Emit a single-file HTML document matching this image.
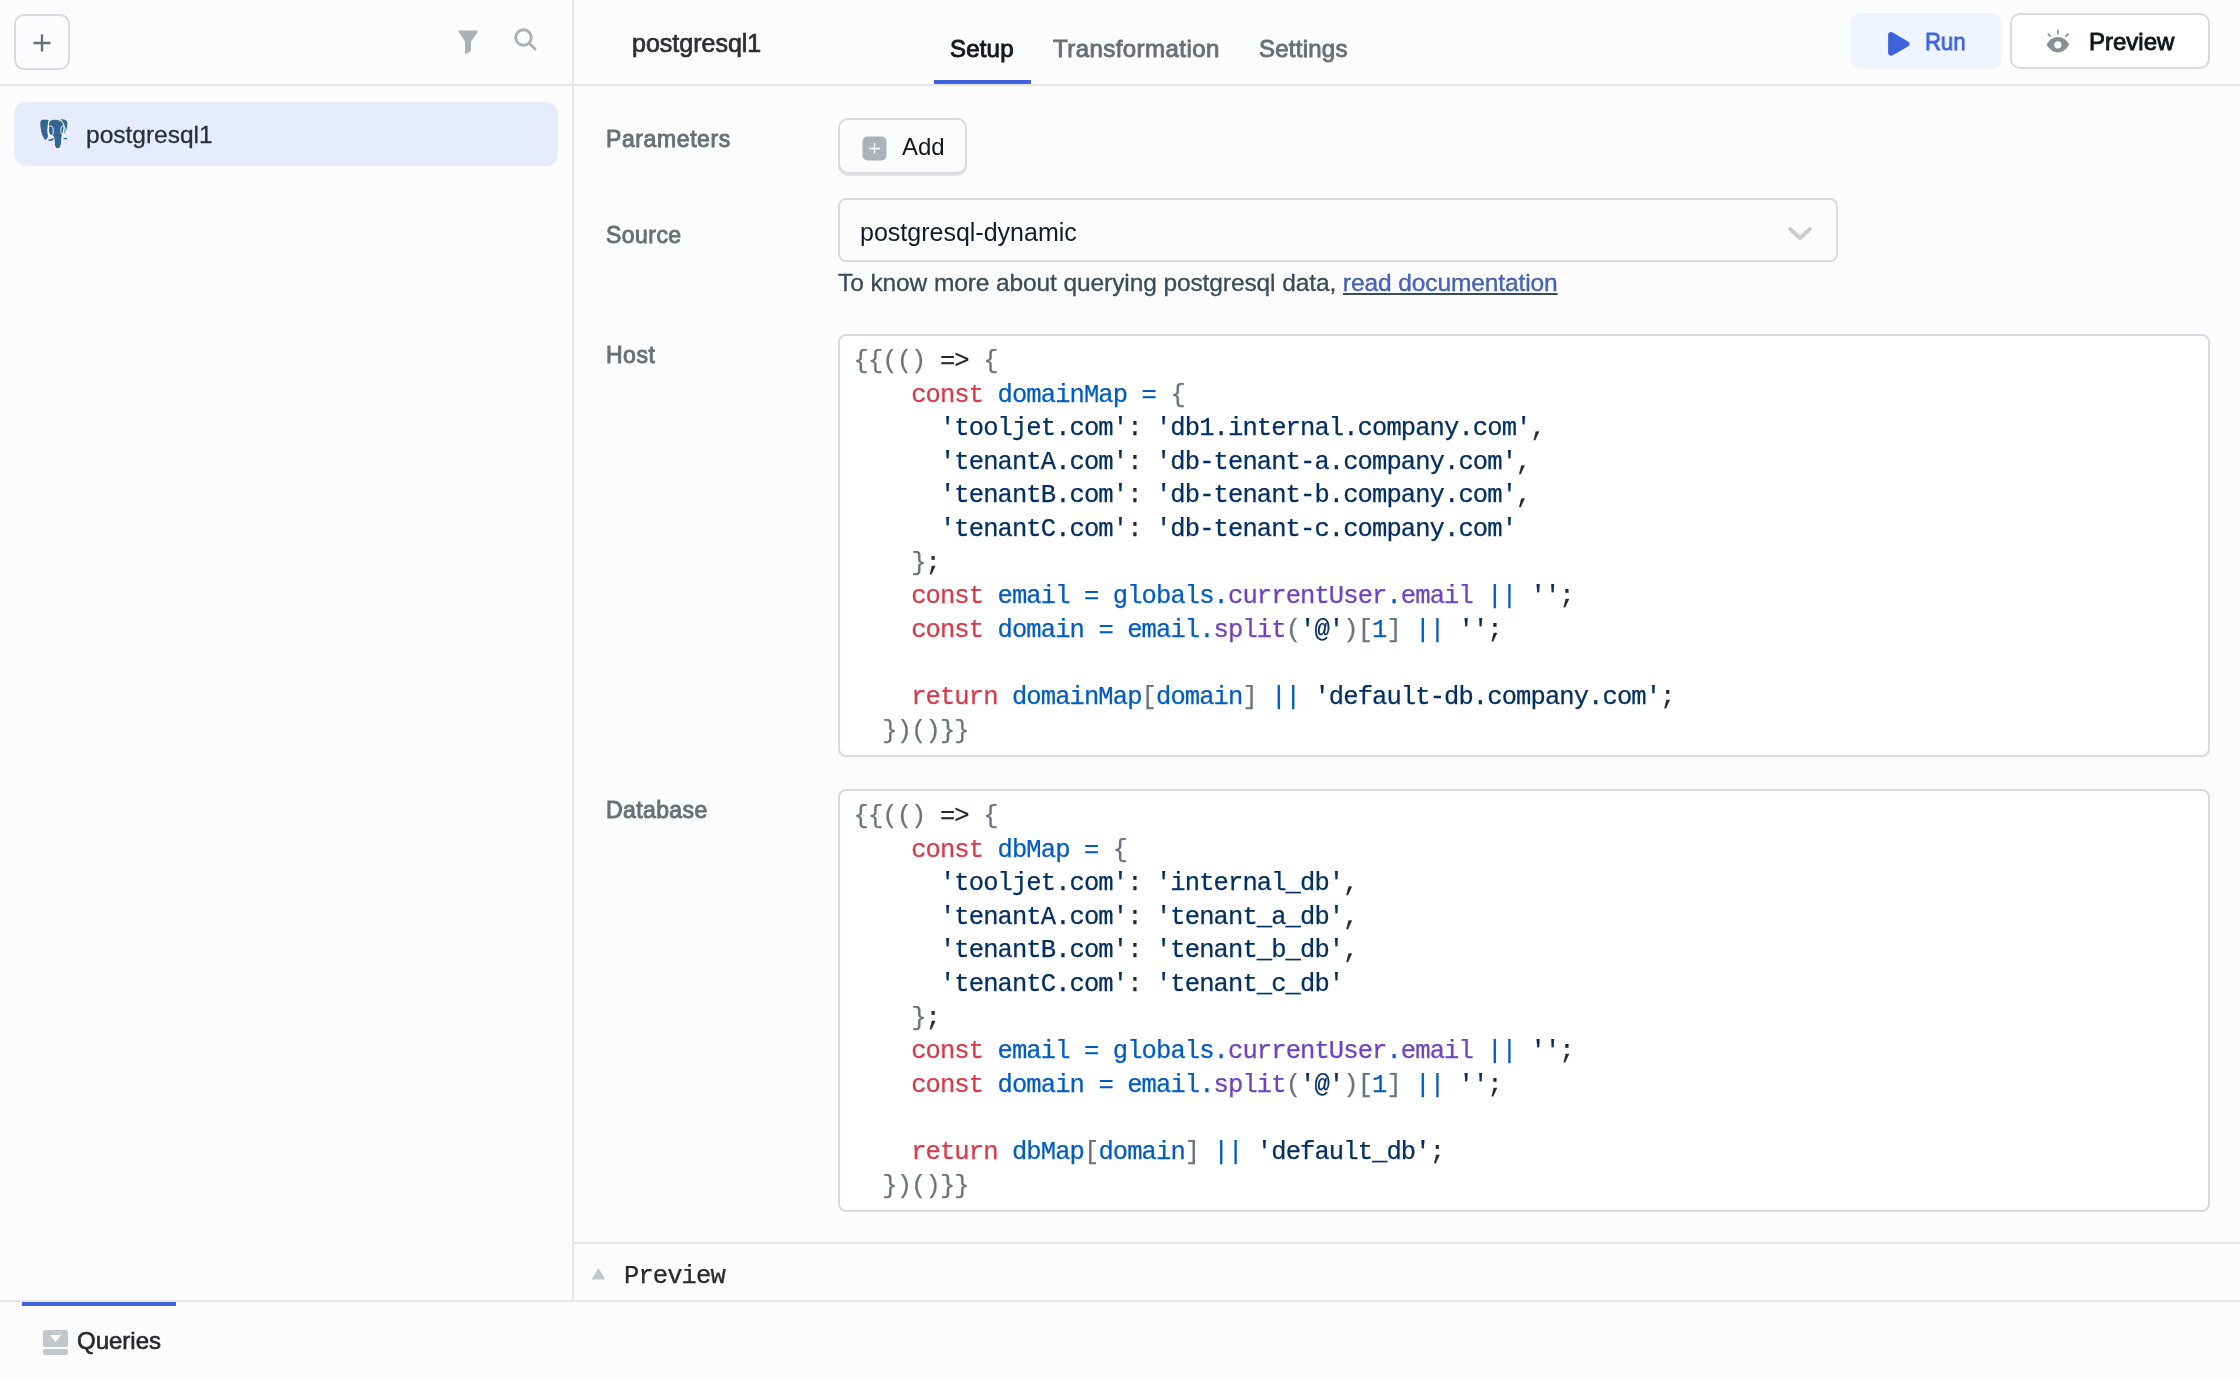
<!DOCTYPE html>
<html><head><meta charset="utf-8">
<style>
*{box-sizing:border-box;margin:0;padding:0}
html,body{width:2240px;height:1378px;overflow:hidden;background:#fcfcfc;font-family:"Liberation Sans",sans-serif;position:relative}
.abs{position:absolute}
.t{will-change:transform}
.code{will-change:transform}
.hl{position:absolute;background:#e4e7ea}
.t{position:absolute;white-space:nowrap;line-height:1}
.btn{position:absolute;border:2px solid #d7dbdf;border-radius:10px}
.code{position:absolute;left:838px;width:1372px;height:423px;border:2px solid #d7dbdf;border-radius:8px;background:#fff;font-family:"Liberation Mono",monospace;font-size:25.5px;letter-spacing:-0.9px;line-height:33.6px;padding:9px 0 0 13.5px;-webkit-text-stroke:0.25px currentColor;white-space:pre;color:#24292e}
.k{color:#d73a49}.v{color:#005cc5}.s{color:#032f62}.p{color:#6f42c1}.b{color:#6a737d}
</style></head><body>

<!-- lines -->
<div class="hl" style="left:0;top:84px;width:2240px;height:2px"></div>
<div class="hl" style="left:572px;top:0;width:2px;height:1302px"></div>
<div class="hl" style="left:574px;top:1242px;width:1666px;height:2px"></div>
<div class="hl" style="left:0;top:1300px;width:2240px;height:2px"></div>

<!-- sidebar header -->
<div class="btn" style="left:14px;top:14px;width:56px;height:56px;background:#fbfcfd">
  <svg class="abs" style="left:15.5px;top:16.6px" width="20" height="20" viewBox="0 0 20 20"><path d="M10 2.5V17.5M2.5 10H17.5" stroke="#687076" stroke-width="2.4" stroke-linecap="round"/></svg>
</div>
<svg class="abs" style="left:456px;top:29px" width="24" height="26" viewBox="0 0 24 26"><path d="M2.5 2.5 Q1.5 1.5 3.5 1.5 H20.5 Q22.5 1.5 21.5 3.5 L15 12.5 V20.5 Q15 22 13.5 23 L10.5 24.5 Q9 25 9 23.5 V12.5 Z" fill="#a9b0b7"/></svg>
<svg class="abs" style="left:511px;top:25px" width="28" height="28" viewBox="0 0 28 28"><circle cx="12.5" cy="12.5" r="7.8" fill="none" stroke="#a9b0b7" stroke-width="2.9"/><path d="M18.5 18.5L24 24" stroke="#a9b0b7" stroke-width="2.9" stroke-linecap="round"/></svg>

<!-- sidebar item -->
<div class="abs" style="left:14px;top:102px;width:544px;height:64px;background:#e6ecfe;border-radius:12px"></div>
<svg class="abs" style="left:34px;top:112px" width="40" height="42" viewBox="0 0 40 42"><g fill="#336791" stroke="#fff" stroke-width="1" stroke-linejoin="round">
<path d="M6 9.5C7 6.5 12 6.8 15.5 7.6C14 11 13.5 18 14.5 24C14 27 12 29 10.5 28C7.5 25 5 15 6 9.5Z"/>
<path d="M25 7.2C28 6 34 7 34 11.5C34 16 32 21 30.5 24C29 21 30 17 29.5 13C29 10 27 8 25 7.2Z"/>
<path d="M14.5 12C15 7.5 19 7 22 7.2C26 7.4 29.5 10 30 14C30.5 18 28.5 22 28 25C27.5 30 28 34 25 36.7C22 37.5 20.5 35 20.3 31C20 27 20 25 19 24C17 24 14.5 22 14.5 18Z"/>
</g><g fill="none" stroke="#fff" stroke-width="0.9"><ellipse cx="16.7" cy="19" rx="2.6" ry="5"/><ellipse cx="29" cy="18.5" rx="2.2" ry="4.6"/></g>
<path d="M14.5 28C16.5 28.6 18.5 28 19.5 26.5" stroke="#336791" stroke-width="1.4" fill="none"/><path d="M29.5 26.6H33" stroke="#336791" stroke-width="1.2"/></svg>
<div class="t" style="left:86px;top:123px;font-size:24.5px;color:#2b2f33;-webkit-text-stroke:0.3px #2b2f33">postgresql1</div>

<!-- main header -->
<div class="t" style="left:632px;top:31px;font-size:25px;color:#2b2f33;-webkit-text-stroke:0.7px #2b2f33">postgresql1</div>
<div class="t" style="left:950px;top:37px;font-size:24px;letter-spacing:0.2px;color:#11181c;-webkit-text-stroke:0.9px #11181c">Setup</div>
<div class="t" style="left:1053px;top:37px;font-size:24px;letter-spacing:0.45px;color:#687076;-webkit-text-stroke:0.9px #687076">Transformation</div>
<div class="t" style="left:1259px;top:37px;font-size:24px;letter-spacing:0.25px;color:#687076;-webkit-text-stroke:0.9px #687076">Settings</div>
<div class="abs" style="left:934px;top:80px;width:97px;height:4px;background:#3e63dd"></div>

<!-- run / preview -->
<div class="abs" style="left:1850px;top:13px;width:152px;height:56px;background:#f0f4ff;border-radius:10px"></div>
<svg class="abs" style="left:1882px;top:26px" width="36" height="36" viewBox="0 0 36 36"><path d="M6.1 9.2C6.1 6.5 8.5 5.3 10.7 6.6L26 15.6C28.2 16.9 28.2 19.1 26 20.4L10.7 29.2C8.5 30.5 6.1 29.3 6.1 26.6Z" fill="#3e63dd"/></svg>
<div class="t" style="left:1925px;top:30px;font-size:24px;color:#3e63dd;-webkit-text-stroke:0.9px #3e63dd;transform:scaleX(0.92);transform-origin:0 0">Run</div>
<div class="btn" style="left:2010px;top:13px;width:200px;height:56px;background:#fff"></div>
<svg class="abs" style="left:2040px;top:25px" width="36" height="32" viewBox="0 0 36 32"><path d="M6.7 19.6C9 15 13 12.1 17.9 12.1C22.8 12.1 26.8 15 29 19.6C26.8 24.5 22.8 27.4 17.9 27.4C13 27.4 9 24.5 6.7 19.6Z" fill="#889096"/><circle cx="17.9" cy="19.8" r="3.6" fill="#fff"/><path d="M17.9 5.6V8.4M8.4 9.2L10.2 11.2M28 9.2L26 11.2" stroke="#889096" stroke-width="1.8" stroke-linecap="round"/></svg>
<div class="t" style="left:2089px;top:30px;font-size:24px;color:#11181c;-webkit-text-stroke:0.9px #11181c;transform:scaleX(1);transform-origin:0 0">Preview</div>

<!-- form labels -->
<div class="t" style="left:606px;top:128px;font-size:23px;letter-spacing:0.6px;color:#687076;-webkit-text-stroke:0.9px #687076">Parameters</div>
<div class="t" style="left:606px;top:224px;font-size:23px;letter-spacing:0.45px;color:#687076;-webkit-text-stroke:0.9px #687076">Source</div>
<div class="t" style="left:606px;top:344px;font-size:23px;letter-spacing:0.5px;color:#687076;-webkit-text-stroke:0.9px #687076">Host</div>
<div class="t" style="left:606px;top:799px;font-size:23px;letter-spacing:0.4px;color:#687076;-webkit-text-stroke:0.9px #687076">Database</div>

<!-- add button -->
<div class="btn" style="left:838px;top:118px;width:129px;height:56px;background:#fcfcfc;box-shadow:0 2px 0 #e4e4e5"></div>
<svg class="abs" style="left:862px;top:136px" width="25" height="25" viewBox="0 0 25 25"><rect x="0.5" y="0.5" width="24" height="24" rx="5" fill="#acb2b8"/><path d="M12.5 7V18M7 12.5H18" stroke="#fff" stroke-width="1.3"/></svg>
<div class="t" style="left:902px;top:135px;font-size:24px;color:#11181c">Add</div>

<!-- source dropdown -->
<div class="btn" style="left:838px;top:198px;width:1000px;height:64px;border-radius:8px"></div>
<div class="t" style="left:860px;top:220px;font-size:25px;color:#101b2c">postgresql-dynamic</div>
<svg class="abs" style="left:1786px;top:224px" width="28" height="20" viewBox="0 0 28 20"><path d="M4 5L14 14L24 5" stroke="#cccccc" stroke-width="3.8" fill="none" stroke-linecap="round" stroke-linejoin="round"/></svg>
<div class="t" style="left:838px;top:271px;font-size:24.5px;letter-spacing:-0.1px;color:#384b59;-webkit-text-stroke:0.3px #384b59">To know more about querying postgresql data, <span style="color:#3e63dd;text-decoration:underline">read documentation</span></div>

<!-- host code -->
<div class="code" style="top:334px"><span class="b">{{(()</span> => <span class="b">{</span>
    <span class="k">const</span> <span class="v">domainMap</span> <span class="v">=</span> <span class="b">{</span>
      <span class="s">'tooljet.com'</span>: <span class="s">'db1.internal.company.com'</span>,
      <span class="s">'tenantA.com'</span>: <span class="s">'db-tenant-a.company.com'</span>,
      <span class="s">'tenantB.com'</span>: <span class="s">'db-tenant-b.company.com'</span>,
      <span class="s">'tenantC.com'</span>: <span class="s">'db-tenant-c.company.com'</span>
    <span class="b">}</span>;
    <span class="k">const</span> <span class="v">email</span> <span class="v">=</span> <span class="v">globals</span><span class="v">.</span><span class="p">currentUser</span><span class="v">.</span><span class="p">email</span> <span class="v">||</span> <span class="s">''</span>;
    <span class="k">const</span> <span class="v">domain</span> <span class="v">=</span> <span class="v">email</span><span class="v">.</span><span class="p">split</span><span class="b">(</span><span class="s">'@'</span><span class="b">)[</span><span class="v">1</span><span class="b">]</span> <span class="v">||</span> <span class="s">''</span>;

    <span class="k">return</span> <span class="v">domainMap</span><span class="b">[</span><span class="v">domain</span><span class="b">]</span> <span class="v">||</span> <span class="s">'default-db.company.com'</span>;
  <span class="b">})()}}</span></div>

<!-- database code -->
<div class="code" style="top:789px"><span class="b">{{(()</span> => <span class="b">{</span>
    <span class="k">const</span> <span class="v">dbMap</span> <span class="v">=</span> <span class="b">{</span>
      <span class="s">'tooljet.com'</span>: <span class="s">'internal_db'</span>,
      <span class="s">'tenantA.com'</span>: <span class="s">'tenant_a_db'</span>,
      <span class="s">'tenantB.com'</span>: <span class="s">'tenant_b_db'</span>,
      <span class="s">'tenantC.com'</span>: <span class="s">'tenant_c_db'</span>
    <span class="b">}</span>;
    <span class="k">const</span> <span class="v">email</span> <span class="v">=</span> <span class="v">globals</span><span class="v">.</span><span class="p">currentUser</span><span class="v">.</span><span class="p">email</span> <span class="v">||</span> <span class="s">''</span>;
    <span class="k">const</span> <span class="v">domain</span> <span class="v">=</span> <span class="v">email</span><span class="v">.</span><span class="p">split</span><span class="b">(</span><span class="s">'@'</span><span class="b">)[</span><span class="v">1</span><span class="b">]</span> <span class="v">||</span> <span class="s">''</span>;

    <span class="k">return</span> <span class="v">dbMap</span><span class="b">[</span><span class="v">domain</span><span class="b">]</span> <span class="v">||</span> <span class="s">'default_db'</span>;
  <span class="b">})()}}</span></div>

<!-- preview panel -->
<svg class="abs" style="left:591px;top:1267px" width="16" height="14" viewBox="0 0 16 14"><path d="M7.5 2.2L13.3 11.8H1.7Z" fill="#c1c8cd" stroke="#c1c8cd" stroke-width="1.2" stroke-linejoin="round"/></svg>
<div class="t" style="left:624px;top:1264px;font-family:'Liberation Mono',monospace;font-size:25.5px;letter-spacing:-0.9px;color:#26292b;-webkit-text-stroke:0.25px #26292b">Preview</div>

<!-- footer -->
<div class="abs" style="left:22px;top:1302px;width:154px;height:4px;background:#3e63dd"></div>
<svg class="abs" style="left:42px;top:1329px" width="27" height="27" viewBox="0 0 27 27"><rect x="1" y="1" width="25" height="17" rx="2.5" fill="#c1c8cd"/><rect x="1" y="20" width="25" height="6" rx="2" fill="#c1c8cd"/><path d="M8 6H19L13.5 13Z" fill="#fff"/></svg>
<div class="t" style="left:77px;top:1329px;font-size:24px;color:#26292b;-webkit-text-stroke:0.6px #26292b">Queries</div>

</body></html>
